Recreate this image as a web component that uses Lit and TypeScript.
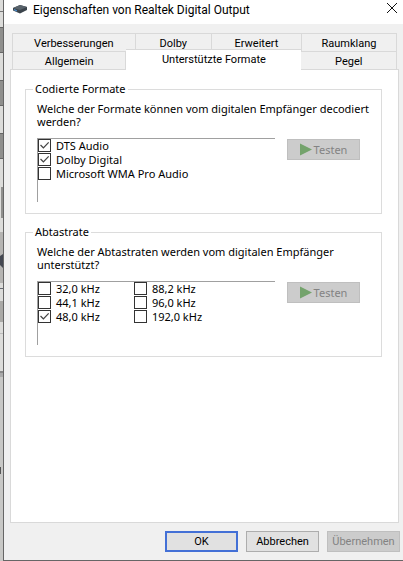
import { LitElement, html, css } from "lit";
import { customElement, property } from "lit/decorators.js";
import { classMap } from "lit/directives/class-map.js";

interface Choice {
  label: string;
  checked: boolean;
}

interface TabItem {
  label: string;
  slot: string;
  selected?: boolean;
}

const BACK_TABS: TabItem[] = [
  { label: "Verbesserungen", slot: "improve" },
  { label: "Dolby", slot: "dolby" },
  { label: "Erweitert", slot: "advanced" },
  { label: "Raumklang", slot: "spatial" },
];

const FRONT_TABS: TabItem[] = [
  { label: "Allgemein", slot: "general" },
  { label: "Unterstützte Formate", slot: "formats", selected: true },
  { label: "Pegel", slot: "level" },
];

const FORMATS: Choice[] = [
  { label: "DTS Audio", checked: true },
  { label: "Dolby Digital", checked: true },
  { label: "Microsoft WMA Pro Audio", checked: false },
];

const RATES: Choice[] = [
  { label: "32,0 kHz", checked: false },
  { label: "44,1 kHz", checked: false },
  { label: "48,0 kHz", checked: true },
  { label: "88,2 kHz", checked: false },
  { label: "96,0 kHz", checked: false },
  { label: "192,0 kHz", checked: false },
];

@customElement("format-group")
export class FormatGroup extends LitElement {
  @property() heading = "";
  @property() question = "";
  @property({ attribute: false }) choices: Choice[] = [];

  static styles = css`
    :host {
      display: block;
    }
    .group {
      box-sizing: border-box;
      min-width: 0;
      margin: 0;
      padding: 6px 11px 11px;
      border: 1px solid #dcdcdc;
    }
    .legend {
      margin-left: -4px;
      padding: 0 2px;
      line-height: 14px;
    }
    .question {
      margin: 0 0 10px;
      line-height: 13px;
    }
    .body {
      display: flex;
      align-items: flex-start;
      gap: 12px;
    }
    .list {
      display: grid;
      box-sizing: border-box;
      flex: 1;
      grid-auto-flow: column;
      grid-template-rows: repeat(3, 14px);
      justify-content: start;
      column-gap: 34px;
      height: 64px;
      border-top: 1px solid #a0a0a0;
      border-left: 1px solid #a0a0a0;
    }
    .choice {
      display: flex;
      align-items: flex-start;
      gap: 5px;
      line-height: 14px;
      white-space: nowrap;
    }
    .box {
      appearance: none;
      display: grid;
      box-sizing: border-box;
      width: 13px;
      height: 13px;
      margin: 0;
      border: 1px solid #333;
      background: #fff;
    }
    .box:checked::before {
      content: "";
      width: 11px;
      height: 11px;
      background: #444;
      clip-path: polygon(10% 50%, 18% 42%, 40% 64%, 84% 18%, 92% 26%, 40% 80%);
    }
    .test {
      display: flex;
      align-items: center;
      justify-content: center;
      box-sizing: border-box;
      gap: 2px;
      width: 73px;
      height: 21px;
      margin: 1px 10px 0 0;
      padding: 0;
      border: 1px solid #bfbfbf;
      background: #ccc;
      color: #838383;
      font: inherit;
    }
    .play {
      width: 12px;
      height: 13px;
    }
  `;

  render() {
    return html`
      <fieldset class="group">
        <legend class="legend">${this.heading}</legend>
        <p class="question">${this.question}</p>
        <div class="body">
          <div class="list">
            ${this.choices.map(
              (c) => html`<label class="choice">
                <input class="box" type="checkbox" .checked=${c.checked} />${c.label}
              </label>`
            )}
          </div>
          <button class="test" type="button" disabled>
            <svg class="play" viewBox="0 0 12 13" aria-hidden="true">
              <path d="M0 0.5 L12 6.5 L0 12.5Z" fill="#74a36c" />
            </svg>
            Testen
          </button>
        </div>
      </fieldset>
    `;
  }
}

@customElement("app-root")
export class AppRoot extends LitElement {
  static styles = css`
    :host {
      display: grid;
      grid-template-columns: 3px minmax(0, 1fr);
      box-sizing: border-box;
      min-height: 100vh;
      background: #c8c8c6;
      color: #000;
      font: 11px "Noto Sans", sans-serif;
    }
    .dialog {
      display: flex;
      flex-direction: column;
      border-left: 1px solid #666;
      border-bottom: 1px solid #666;
      background: #f0f0f0;
    }
    .backdrop {
      display: block;
      width: 3px;
      height: 561px;
    }
    .title-bar {
      display: flex;
      align-items: center;
      gap: 6px;
      height: 24px;
      padding: 0 5px 0 9px;
      background: #fff;
    }
    .title {
      flex: 1;
      margin: 0 0 4px;
      font: 400 12px/18px Roboto, sans-serif;
    }
    .device {
      width: 14px;
      height: 10px;
      margin-bottom: 6px;
    }
    .close {
      width: 12px;
      height: 12px;
      margin: 0 0 8px;
      padding: 0;
      border: 0;
      background: none;
    }
    .cross {
      display: block;
      width: 12px;
      height: 12px;
    }
    .tabs {
      margin: 9px 6px 0 8px;
    }
    .row {
      display: flex;
      height: 18px;
      border-left: 1px solid #d9d9d9;
    }
    .tab {
      box-sizing: border-box;
      height: 18px;
      padding: 2px 0 0;
      border: 1px solid #d9d9d9;
      border-width: 1px 1px 0 0;
      background: #f0f0f0;
      color: #000;
      font: 11px/14px Roboto, sans-serif;
    }
    .improve {
      flex: 123;
    }
    .dolby {
      flex: 76;
    }
    .advanced {
      flex: 90;
    }
    .spatial,
    .level {
      flex: 95;
    }
    .general {
      flex: 113;
    }
    .formats {
      flex: 176;
    }
    .selected {
      z-index: 1;
      height: 21px;
      margin-top: -2px;
      padding-bottom: 2px;
      border-right: 0;
      background: #fff;
    }
    .panel {
      display: flex;
      flex: 1;
      flex-direction: column;
      gap: 11px;
      margin: 0 4px 0 6px;
      padding: 12px 16px 12px 14px;
      border: 1px solid #d9d9d9;
      background: #fff;
    }
    .actions {
      display: flex;
      justify-content: flex-end;
      gap: 8px;
      padding: 8px 3px 8px 0;
    }
    .action {
      box-sizing: border-box;
      width: 73px;
      height: 21px;
      padding: 0;
      border: 1px solid #adadad;
      background: #e1e1e1;
      color: #000;
      font: 11px Roboto, sans-serif;
    }
    .primary {
      border: 2px solid #4370d6;
    }
    .action:disabled {
      border-color: #bfbfbf;
      background: #ccc;
      color: #838383;
    }
  `;

  private tab(item: TabItem) {
    return html`<button
      type="button"
      role="tab"
      aria-selected=${item.selected ? "true" : "false"}
      class=${classMap({ tab: true, [item.slot]: true, selected: !!item.selected })}
    >${item.label}</button>`;
  }

  render() {
    return html`
      <svg class="backdrop" viewBox="0 0 3 561" aria-hidden="true">
        <rect width="3" height="371" fill="#dcdcda" />
        <rect y="11" width="3" height="1" fill="#777" />
        <path d="M0 27h3v26h-3zM0 80h3v26h-3zM0 133h3v26h-3zM1 187h2v31h-2z" fill="#8f8f8d" />
        <path d="M0 27h3v1h-3zM0 52h3v1h-3zM0 80h3v1h-3zM0 105h3v1h-3zM0 133h3v1h-3zM0 158h3v1h-3z" fill="#666" />
        <rect y="232" width="3" height="51" fill="#b5b4b2" />
        <path d="M0 256L3 254V268L0 265Z" fill="#444852" />
        <rect y="288" width="3" height="1" fill="#666a72" />
        <rect y="301" width="3" height="21" fill="#aaa9a6" />
        <rect y="333" width="3" height="1" fill="#bbb" />
        <rect y="371" width="3" height="2" fill="#888" />
        <rect y="373" width="3" height="4" fill="#aaa" />
        <rect y="467" width="1" height="7" fill="#555" />
      </svg>
      <main class="dialog">
        <header class="title-bar">
          <svg class="device" viewBox="0 0 14 10" aria-hidden="true">
            <path d="M0 4 L7 1 L14 3 L14 6 L7 9.5 L0 6.5Z" fill="#3b444c" />
            <path d="M0 4 L7 1 L14 3 L7 6Z" fill="#59636b" />
            <path d="M1 5 L4 6.3 L4 7.5 L1 6.2Z" fill="#4b8fd0" />
          </svg>
          <h1 class="title">Eigenschaften von Realtek Digital Output</h1>
          <button class="close" type="button" aria-label="Schließen">
            <svg class="cross" viewBox="0 0 12 12" aria-hidden="true">
              <path d="M1 1 L11 11 M11 1 L1 11" stroke="#111" fill="none" />
            </svg>
          </button>
        </header>
        <nav class="tabs" role="tablist">
          <div class="row">${BACK_TABS.map((t) => this.tab(t))}</div>
          <div class="row">${FRONT_TABS.map((t) => this.tab(t))}</div>
        </nav>
        <section class="panel">
          <format-group
            heading="Codierte Formate"
            question="Welche der Formate können vom digitalen Empfänger decodiert werden?"
            .choices=${FORMATS}
          ></format-group>
          <format-group
            heading="Abtastrate"
            question="Welche der Abtastraten werden vom digitalen Empfänger unterstützt?"
            .choices=${RATES}
          ></format-group>
        </section>
        <footer class="actions">
          <button class="action primary" type="button">OK</button>
          <button class="action" type="button">Abbrechen</button>
          <button class="action" type="button" disabled>Übernehmen</button>
        </footer>
      </main>
    `;
  }
}
